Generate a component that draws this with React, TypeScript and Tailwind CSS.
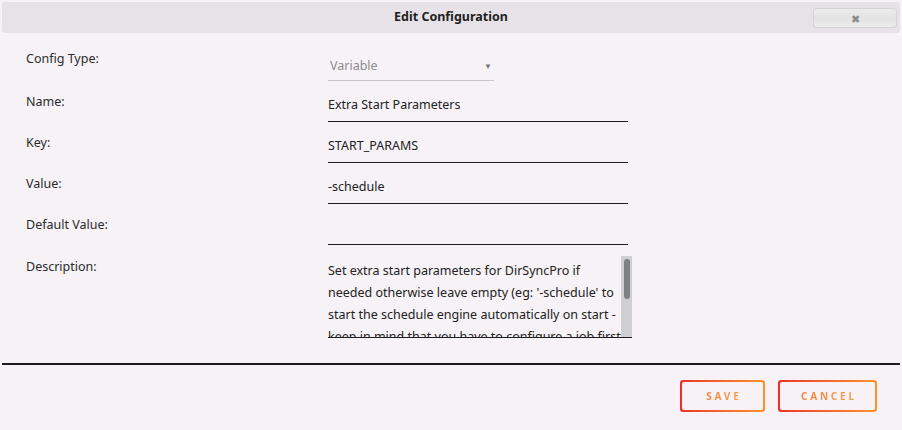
export default function App() {
  const rows = [
    { label: "Name:", value: "Extra Start Parameters" },
    { label: "Key:", value: "START_PARAMS" },
    { label: "Value:", value: "-schedule" },
    { label: "Default Value:", value: "" },
  ];

  return (
    <div
      className="w-[902px] h-[430px] bg-[#f6f2f6] text-[12.5px] text-[#2b2b2b] flex flex-col"
      style={{ fontFamily: '"Noto Sans", "Open Sans", sans-serif' }}
    >
      {/* Header */}
      <div className="mx-[2px] mt-[2px] h-[31px] rounded-[3px] bg-[#e7e2e7] relative flex items-center justify-center">
        <h1 className="text-[12.5px] font-bold text-[#222]">Edit Configuration</h1>
        <button className="absolute right-[3px] top-[6px] w-[84px] h-[20px] rounded-[3px] border border-[#d6d2d6] bg-gradient-to-b from-[#ececec] via-[#e3e3e3] to-[#ececec] flex items-center justify-center text-[11px] leading-none text-[#8a8a8a]">
          ✖
        </button>
      </div>

      {/* Form */}
      <div className="pl-[26px] pt-[18px] flex flex-col">
        <div className="flex h-[41px]">
          <div className="w-[302px] leading-[16px]">Config Type:</div>
          <div className="w-[166px] h-[30px] border-b border-[#c9c6c9] flex items-center justify-between pl-[2px] pr-[2px] pt-[1px] text-[#8c8c8c]">
            <span>Variable</span>
            <span className="text-[8px] text-[#777]">▼</span>
          </div>
        </div>
        {rows.map((r) => (
          <div key={r.label} className="flex h-[41px]">
            <div className="w-[302px] leading-[16px] pt-[2px]">{r.label}</div>
            <div className="w-[300px] h-[30px] border-b border-[#1f1f1f] flex items-center pb-[2px] text-[#222]">
              {r.value}
            </div>
          </div>
        ))}
        <div className="flex">
          <div className="w-[302px] leading-[16px] pt-[3px]">Description:</div>
          <div className="w-[304px] h-[82px] border-b border-[#1f1f1f] flex overflow-hidden">
            <div className="w-[293px] pt-[4px] leading-[22px] text-[#222]">
              Set extra start parameters for DirSyncPro if needed otherwise leave empty (eg: '-schedule' to start the schedule engine automatically on start - keep in mind that you have to configure a job first
            </div>
            <div className="w-[11px] bg-[#cfcfcf] flex justify-center pt-[3px]">
              <div className="w-[6px] h-[40px] rounded-full bg-[#7c8283]" />
            </div>
          </div>
        </div>
      </div>

      {/* Divider */}
      <div className="mx-[2px] mt-[25px] h-[2px] bg-[#1c1c1c]" />

      {/* Footer */}
      <div className="flex justify-end gap-[13px] pr-[25px] pt-[15px]">
        {[
          { t: "SAVE", w: "w-[85px]" },
          { t: "CANCEL", w: "w-[99px]" },
        ].map((b) => (
          <button
            key={b.t}
            className={`${b.w} h-[32px] rounded-[3px] p-[2px] bg-gradient-to-r from-[#ec2d2d] to-[#ff922b]`}
          >
            <span className="w-full h-full rounded-[2px] bg-[#f6f2f6] flex items-center justify-center">
              <span className="text-[10px] font-bold tracking-[0.28em] pl-[0.28em] bg-gradient-to-r from-[#f57f3a] to-[#f9a04a] bg-clip-text text-transparent">
                {b.t}
              </span>
            </span>
          </button>
        ))}
      </div>
    </div>
  );
}
